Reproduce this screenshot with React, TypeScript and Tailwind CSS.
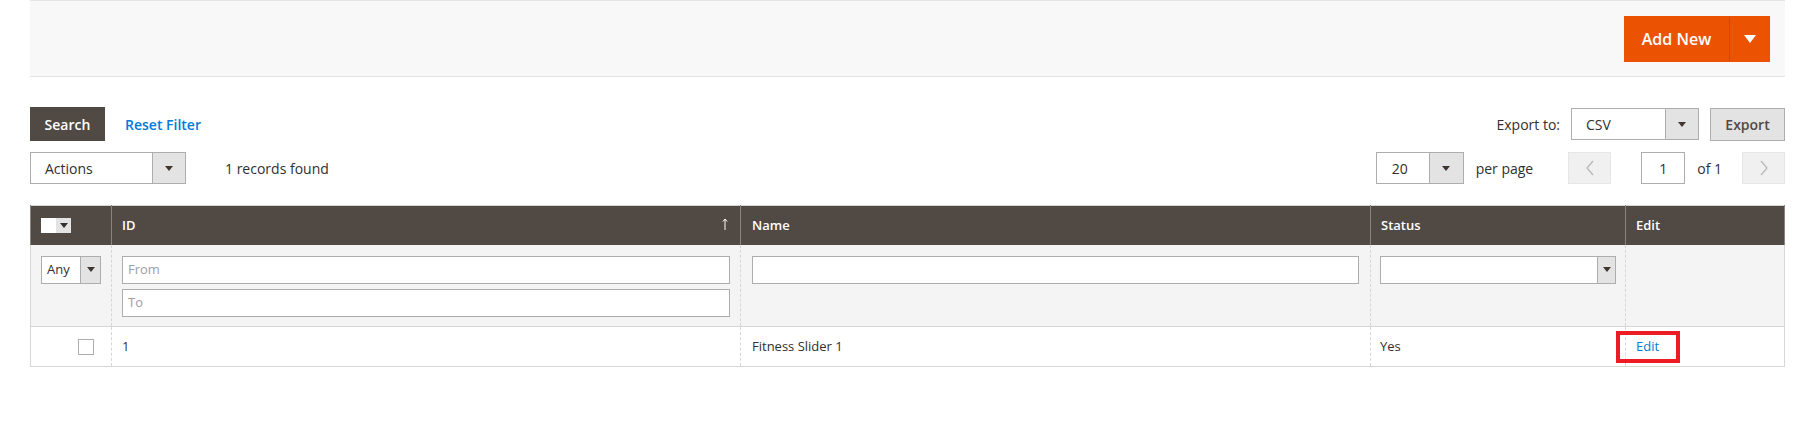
import React from 'react';

const font = { fontFamily: '"Open Sans", "Noto Sans", sans-serif' };

function Caret({ className = 'border-t-[#41362f]' }: { className?: string }) {
  return (
    <span
      className={`inline-block h-0 w-0 border-x-[4px] border-t-[5px] border-x-transparent ${className}`}
    />
  );
}

function Select({
  label,
  width,
  arrow,
  height = 'h-[32px]',
  text = 'text-[14px] pl-[14px]',
}: {
  label: string;
  width: string;
  arrow: string;
  height?: string;
  text?: string;
}) {
  return (
    <div className={`flex ${height} ${width} border border-[#adadad] bg-white`}>
      <div className={`flex flex-1 items-center text-[#303030] ${text}`}>{label}</div>
      <div className={`flex ${arrow} items-center justify-center border-l border-[#adadad] bg-[#e3e3e3]`}>
        <Caret />
      </div>
    </div>
  );
}

function Chevron({ dir }: { dir: 'left' | 'right' }) {
  return (
    <svg width="10" height="16" viewBox="0 0 10 16" fill="none">
      <polyline
        points={dir === 'left' ? '8,1 2,8 8,15' : '2,1 8,8 2,15'}
        stroke="#b8b8b8"
        strokeWidth="1.3"
      />
    </svg>
  );
}

export default function App() {
  return (
    <div className="min-h-screen bg-white px-[30px] text-[#303030]" style={font}>
      {/* page actions bar */}
      <div className="flex h-[77px] items-center justify-end border-y border-[#e3e3e3] bg-[#f8f8f8] pr-[15px]">
        <div className="flex h-[46px] bg-[#eb5202] text-white">
          <button className="w-[105px] text-[16px] font-semibold">Add New</button>
          <div className="my-[1px] w-px bg-[#c94a0c]" />
          <button className="flex w-[40px] items-center justify-center">
            <Caret className="border-x-[6px] border-t-[8px] border-t-white" />
          </button>
        </div>
      </div>

      {/* search / export */}
      <div className="mt-[30px] flex h-[34px] items-center justify-between">
        <div className="flex items-center">
          <button className="h-[34px] w-[75px] bg-[#514943] text-[14px] font-semibold text-white">Search</button>
          <a className="ml-[20px] text-[14px] font-semibold text-[#007bdb]">Reset Filter</a>
        </div>
        <div className="flex items-center">
          <span className="text-[14px]">Export to:</span>
          <div className="ml-[11px]">
            <Select label="CSV" width="w-[128px]" arrow="w-[33px]" />
          </div>
          <button className="ml-[11px] h-[33px] w-[75px] border border-[#adadad] bg-[#e3e3e3] text-[14px] font-semibold text-[#514943]">
            Export
          </button>
        </div>
      </div>

      {/* actions / pager */}
      <div className="mt-[11px] flex h-[32px] items-center justify-between">
        <div className="flex items-center">
          <Select label="Actions" width="w-[156px]" arrow="w-[33px]" />
          <span className="ml-[39px] text-[14px]">1 records found</span>
        </div>
        <div className="flex items-center">
          <Select label="20" width="w-[88px]" arrow="w-[34px]" text="text-[14px] pl-[15px]" />
          <span className="ml-[12px] text-[14px]">per page</span>
          <button className="ml-[35px] flex h-[32px] w-[43px] items-center justify-center border border-[#e6e6e6] bg-[#f0f0f0]">
            <Chevron dir="left" />
          </button>
          <div className="ml-[30px] flex h-[32px] w-[44px] items-center justify-center border border-[#adadad] text-[14px]">1</div>
          <span className="ml-[12px] text-[14px]">of 1</span>
          <button className="ml-[20px] flex h-[32px] w-[43px] items-center justify-center border border-[#e6e6e6] bg-[#f0f0f0]">
            <Chevron dir="right" />
          </button>
        </div>
      </div>

      {/* grid */}
      <table className="mt-[21px] w-full table-fixed border-collapse border border-[#d6d6d6] text-[13px]">
        <colgroup>
          <col className="w-[81px]" />
          <col className="w-[629px]" />
          <col className="w-[630px]" />
          <col className="w-[255px]" />
          <col />
        </colgroup>
        <thead>
          <tr className="h-[39px] bg-[#514943] text-left text-white">
            <th className="border-x border-[#8a837f] px-[10px] font-semibold">
              <div className="flex h-[15px] w-[30px]">
                <div className="w-[15px] bg-white" />
                <div className="flex w-[15px] items-center justify-center bg-[#e3e3e3]">
                  <Caret className="border-t-[#303030]" />
                </div>
              </div>
            </th>
            <th className="border-x border-[#8a837f] px-[10px] font-semibold">
              <div className="flex items-center justify-between">
                <span>ID</span>
                <svg width="6" height="12" viewBox="0 0 6 12" fill="none" className="mr-[2px] mb-[3px]">
                  <path d="M3 12V1M0.8 3.5L3 1l2.2 2.5" stroke="white" strokeWidth="1" />
                </svg>
              </div>
            </th>
            <th className="border-x border-[#8a837f] px-[11px] font-semibold">Name</th>
            <th className="border-x border-[#8a837f] px-[10px] font-semibold">Status</th>
            <th className="border-x border-[#8a837f] px-[10px] font-semibold">Edit</th>
          </tr>
        </thead>
        <tbody>
          <tr className="h-[82px] bg-[#f4f4f4] align-top">
            <td className="border-r border-dashed border-[#d6d6d6] px-[10px] pt-[11px]">
              <Select label="Any" width="w-[60px]" arrow="w-[20px]" height="h-[28px]" text="text-[13px] pl-[5px]" />
            </td>
            <td className="border-r border-dashed border-[#d6d6d6] px-[10px] pt-[11px]">
              <div className="flex h-[28px] items-center border border-[#adadad] bg-white pl-[5px] text-[#9e9e9e]">From</div>
              <div className="mt-[5px] flex h-[28px] items-center border border-[#adadad] bg-white pl-[5px] text-[#9e9e9e]">To</div>
            </td>
            <td className="border-r border-dashed border-[#d6d6d6] px-[11px] pt-[11px]">
              <div className="h-[28px] border border-[#adadad] bg-white" />
            </td>
            <td className="border-r border-dashed border-[#d6d6d6] px-[9px] pt-[11px]">
              <Select label="" width="w-full" arrow="w-[18px]" height="h-[28px]" />
            </td>
            <td className="px-[10px]" />
          </tr>
          <tr className="h-[40px] border-t border-[#d6d6d6] bg-white">
            <td className="border-r border-dashed border-[#d6d6d6] pr-[17px]">
              <div className="ml-auto h-[16px] w-[16px] border border-[#adadad] bg-white" />
            </td>
            <td className="border-r border-dashed border-[#d6d6d6] px-[10px]">1</td>
            <td className="border-r border-dashed border-[#d6d6d6] px-[11px]">Fitness Slider 1</td>
            <td className="border-r border-dashed border-[#d6d6d6] px-[9px]">Yes</td>
            <td className="relative px-[10px]">
              <a className="text-[#007bdb]">Edit</a>
              <div className="absolute left-[-10px] top-[4px] h-[32px] w-[64px] border-[4px] border-[#ed1c24]" />
            </td>
          </tr>
        </tbody>
      </table>
    </div>
  );
}
